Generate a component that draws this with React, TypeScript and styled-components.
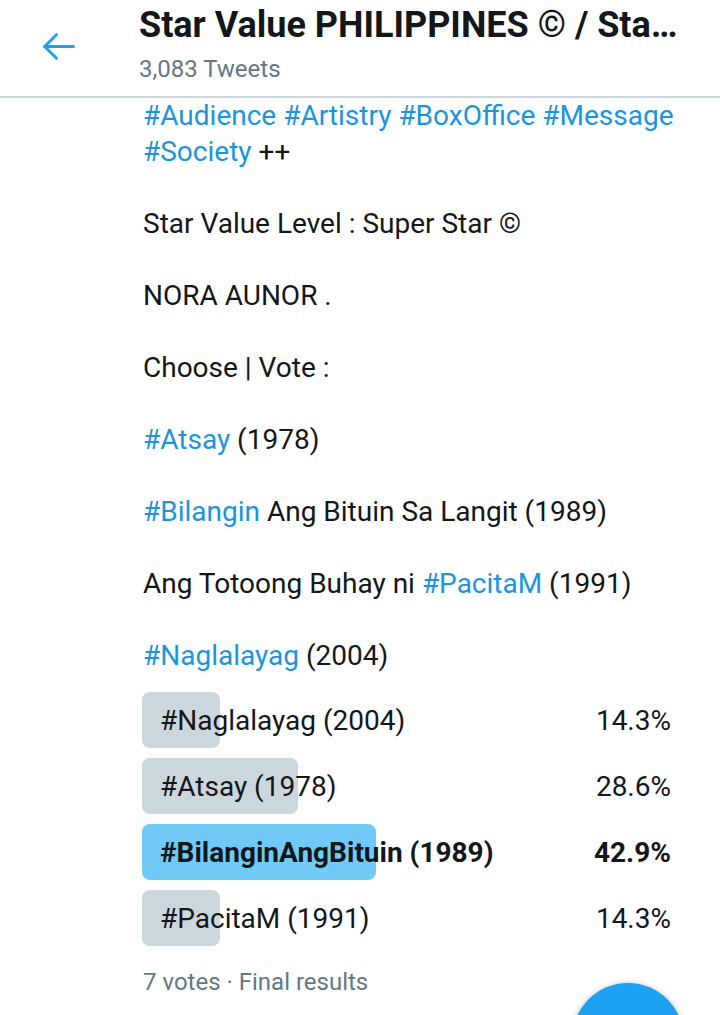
import React from 'react'
import styled, { createGlobalStyle } from 'styled-components'

const GlobalStyle = createGlobalStyle`
  html, body {
    margin: 0;
    padding: 0;
    background: #fff;
    font-family: Roboto, "Noto Sans", sans-serif;
    color: #14171a;
    overflow: hidden;
  }
`

interface Choice {
  label: string
  percent: number
  winner?: boolean
}

const choices: Choice[] = [
  { label: '#Naglalayag (2004)', percent: 14.3 },
  { label: '#Atsay (1978)', percent: 28.6 },
  { label: '#BilanginAngBituin (1989)', percent: 42.9, winner: true },
  { label: '#PacitaM (1991)', percent: 14.3 },
]

const BackArrow = () => (
  <svg width="45" height="45" viewBox="0 0 24 24" fill="none" stroke="#1da1f2" strokeWidth="1.6" strokeLinecap="round" strokeLinejoin="round">
    <path d="M20 12H4.7" />
    <path d="M10.9 5.7L4.6 12l6.3 6.3" />
  </svg>
)

export default function App() {
  return (
    <StyledRoot>
      <GlobalStyle />
      <StyledHeader>
        <StyledBack><BackArrow /></StyledBack>
        <StyledHeadText>
          <StyledTitle>Star Value PHILIPPINES © / Star Value Awards</StyledTitle>
          <StyledSub>3,083 Tweets</StyledSub>
        </StyledHeadText>
      </StyledHeader>

      <StyledBody>
        <StyledPara>
          <Tag>#Audience</Tag> <Tag>#Artistry</Tag> <Tag>#BoxOffice</Tag> <Tag>#Message</Tag>{' '}
          <Tag>#Society</Tag> ++
        </StyledPara>
        <StyledPara>Star Value Level : Super Star ©</StyledPara>
        <StyledPara>NORA AUNOR .</StyledPara>
        <StyledPara>Choose | Vote :</StyledPara>
        <StyledPara><Tag>#Atsay</Tag> (1978)</StyledPara>
        <StyledPara><Tag>#Bilangin</Tag> Ang Bituin Sa Langit (1989)</StyledPara>
        <StyledPara>Ang Totoong Buhay ni <Tag>#PacitaM</Tag> (1991)</StyledPara>
        <StyledPara $last><Tag>#Naglalayag</Tag> (2004)</StyledPara>

        <StyledPoll>
          {choices.map((c) => (
            <StyledChoice key={c.label} $winner={c.winner}>
              <StyledBar $winner={c.winner} style={{ width: `${c.percent}%` }} />
              <StyledLabel>{c.label}</StyledLabel>
              <StyledPercent>{c.percent}%</StyledPercent>
            </StyledChoice>
          ))}
        </StyledPoll>
        <StyledMeta>7 votes · Final results</StyledMeta>
      </StyledBody>

      <StyledFab />
    </StyledRoot>
  )
}

const StyledRoot = styled.div`
  position: relative;
  width: 720px;
  height: 1015px;
  overflow: hidden;
`

const StyledHeader = styled.header`
  display: flex;
  align-items: flex-start;
  height: 96px;
  border-bottom: 2px solid #ccd6dd;
`

const StyledBack = styled.div`
  display: flex;
  align-items: center;
  justify-content: center;
  width: 116px;
  height: 92px;
`

const StyledHeadText = styled.div`
  display: flex;
  flex-direction: column;
  min-width: 0;
  width: 547px;
  margin-left: 23px;
  padding-top: 5px;
`

const StyledTitle = styled.div`
  font-size: 36px;
  font-weight: 700;
  line-height: 40px;
  white-space: nowrap;
  overflow: hidden;
  text-overflow: ellipsis;
  color: #14171a;
`

const StyledSub = styled.div`
  font-size: 24px;
  line-height: 30px;
  color: #657786;
  margin-top: 9px;
`

const StyledBody = styled.main`
  padding: 0 33px 0 143px;
`

const StyledPara = styled.p<{ $last?: boolean }>`
  margin: 0 0 ${(p) => (p.$last ? '18px' : '36px')};
  font-size: 28px;
  line-height: 36px;
  color: #14171a;
`

const Tag = styled.span`
  color: #1b95e0;
`

const StyledPoll = styled.div`
  display: flex;
  flex-direction: column;
  gap: 10px;
  width: 545px;
  margin-left: -1px;
`

const StyledChoice = styled.div<{ $winner?: boolean }>`
  position: relative;
  display: flex;
  align-items: center;
  justify-content: space-between;
  height: 56px;
  padding: 0 16px 0 18px;
  font-size: 28px;
  font-weight: ${(p) => (p.$winner ? 700 : 400)};
  color: #14171a;
`

const StyledBar = styled.div<{ $winner?: boolean }>`
  position: absolute;
  left: 0;
  top: 0;
  bottom: 0;
  border-radius: 8px;
  background: ${(p) => (p.$winner ? '#71c9f8' : '#ccd6dd')};
`

const StyledLabel = styled.span`
  position: relative;
`

const StyledPercent = styled.span`
  position: relative;
`

const StyledMeta = styled.div`
  margin-top: 20px;
  font-size: 24px;
  line-height: 32px;
  color: #657786;
`

const StyledFab = styled.div`
  position: absolute;
  left: 572px;
  top: 983px;
  width: 112px;
  height: 112px;
  border-radius: 50%;
  background: #1da1f2;
  box-shadow: 0 1px 6px rgba(0, 0, 0, 0.3);
`
